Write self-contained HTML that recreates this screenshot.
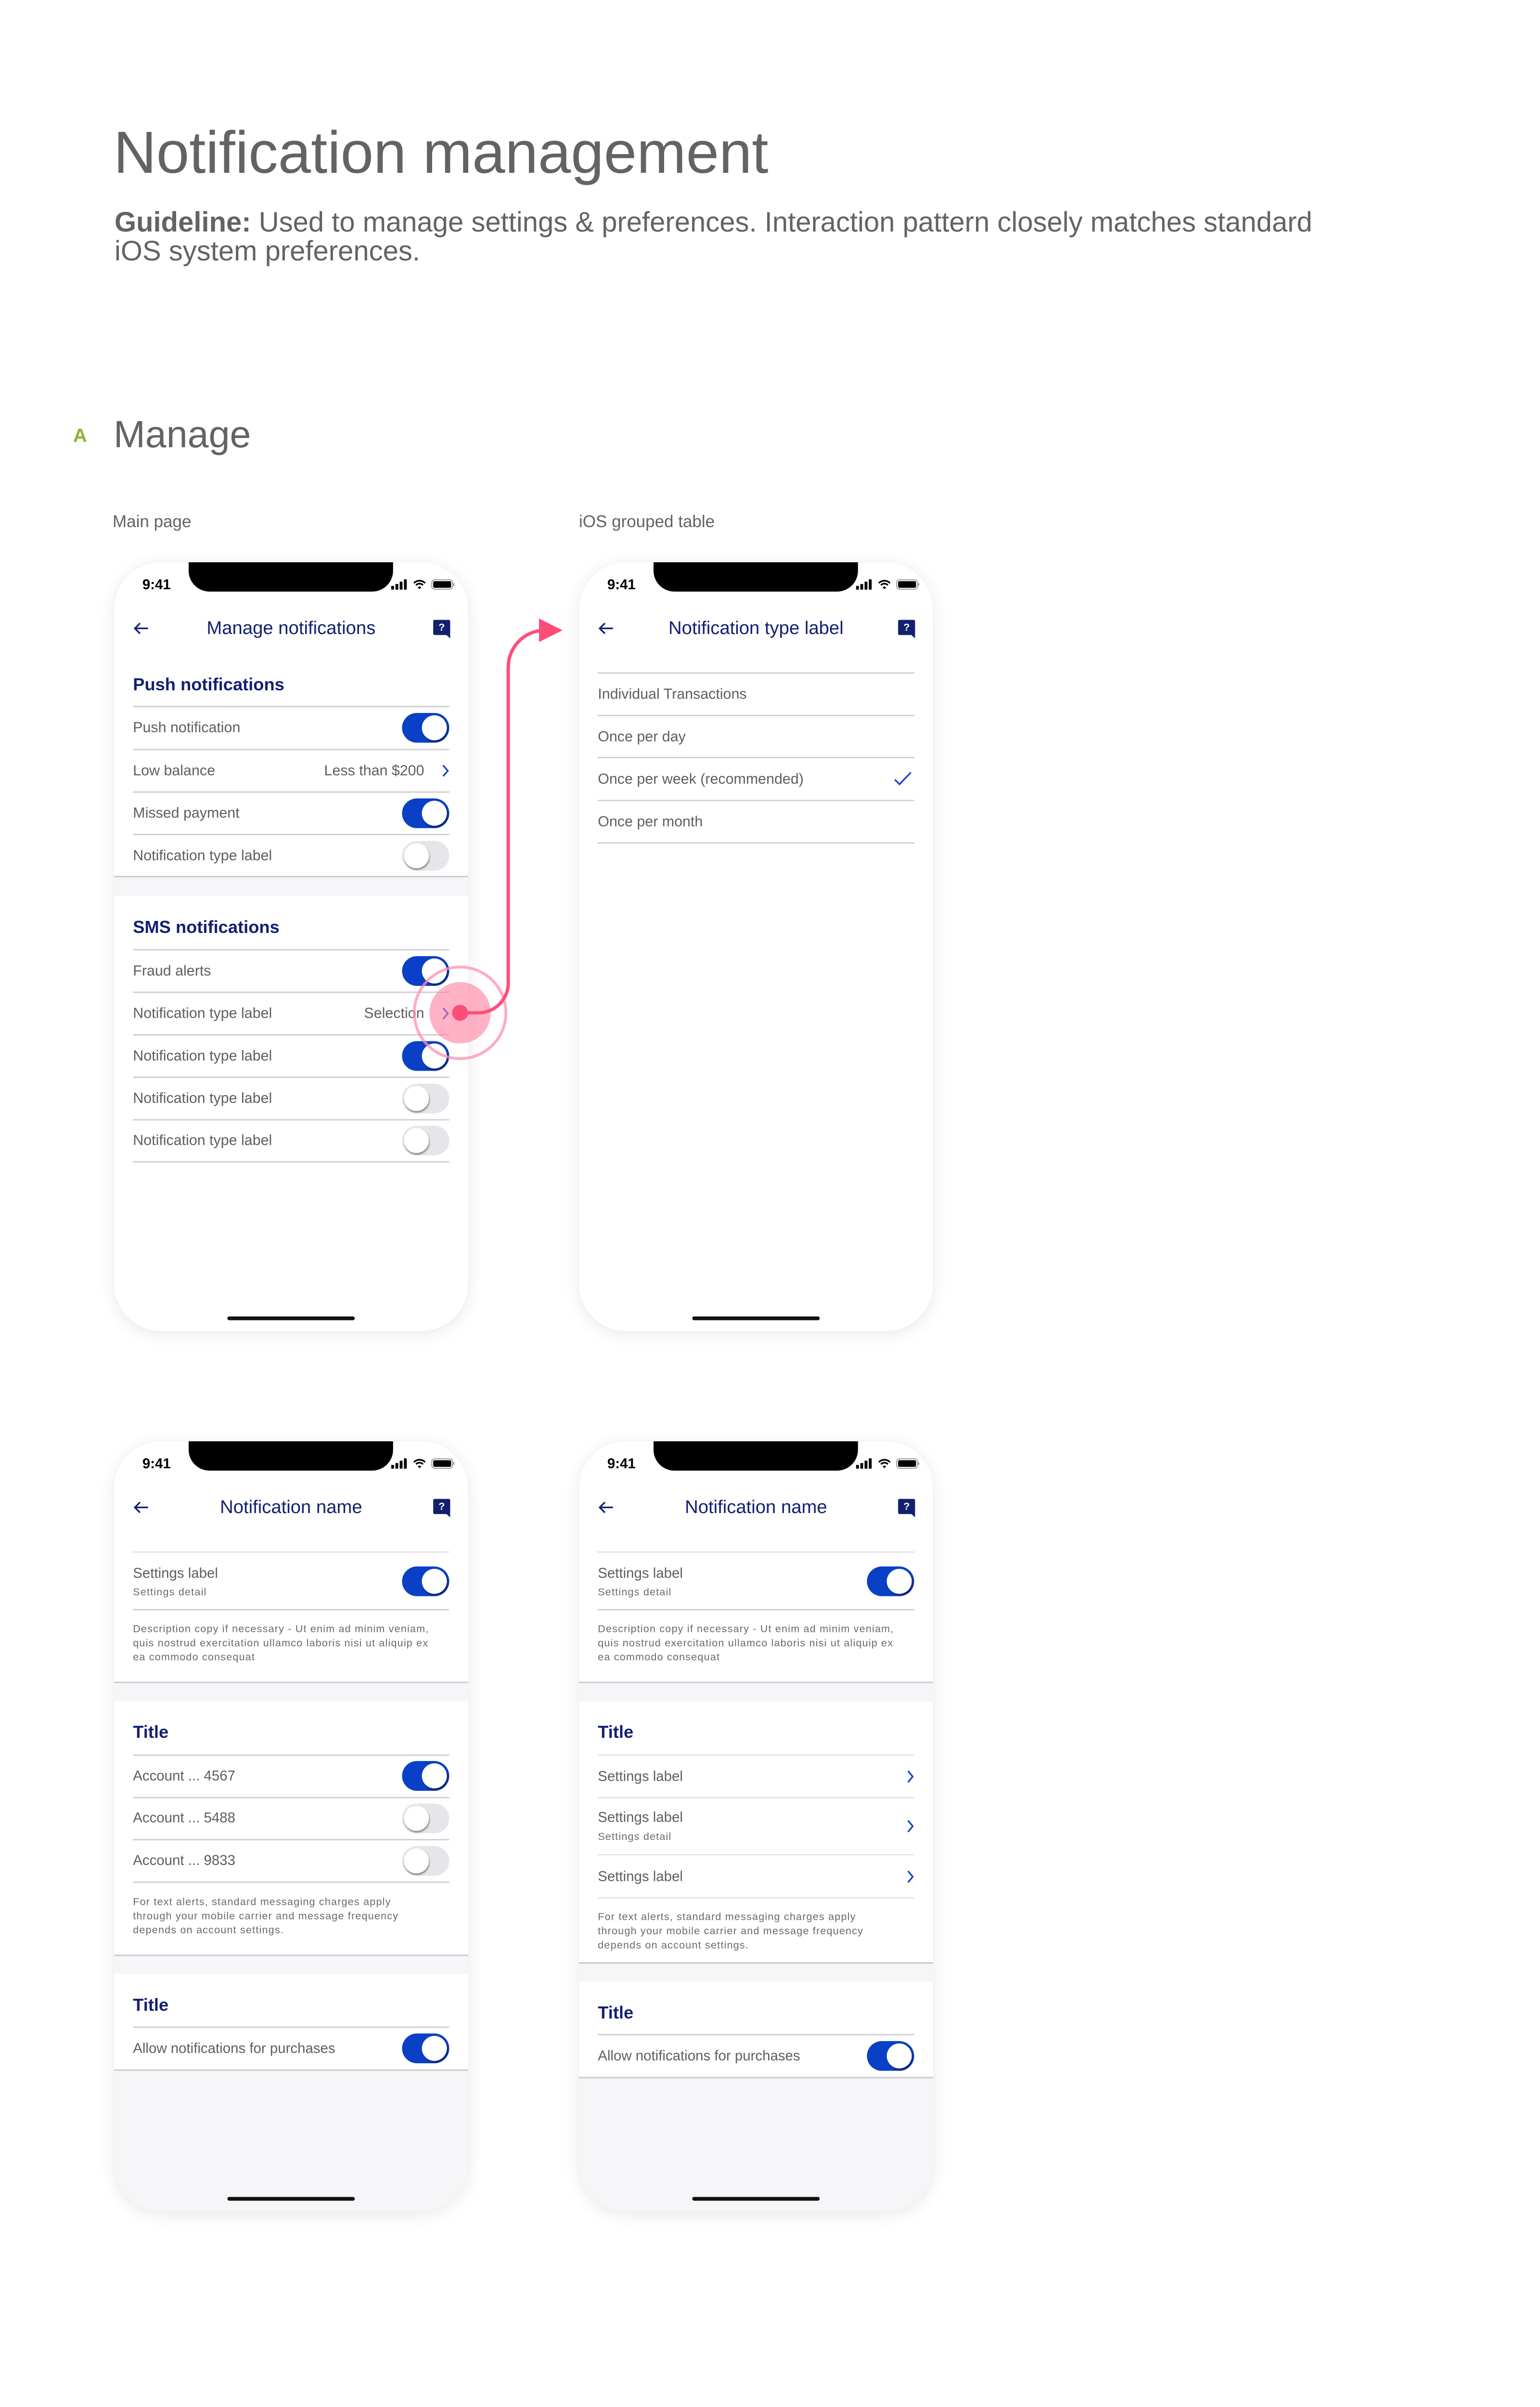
<!DOCTYPE html>
<html><head><meta charset="utf-8">
<style>
*{margin:0;padding:0;box-sizing:border-box}
html,body{width:3200px;height:5094px;background:#fff;overflow:hidden}
body{position:relative;font-family:"Liberation Sans",Arial,sans-serif;color:#636366}
.abs{position:absolute}
.ph{position:absolute;width:750px;height:1628px;border-radius:100px;background:#fff;overflow:hidden;box-shadow:0 6px 36px rgba(0,0,0,.09),0 0 6px rgba(0,0,0,.03);transform:scale(.981);transform-origin:0 0}
.ph>*{position:absolute}
.notch{left:158px;top:0;width:433px;height:62px;background:#000;border-radius:0 0 44px 44px}
.time{left:60px;top:48px;transform:translateY(-50%);font-size:30px;font-weight:bold;color:#000;line-height:34px}
.ttl{left:0;width:750px;text-align:center;top:140px;transform:translateY(-50%);font-size:39px;color:#13206f;line-height:46px}
.ln{left:40px;width:670px;height:3px;background:#cfcfd5}
.fl{left:0;width:750px;height:3px;background:#c9c9cf}
.gr{left:0;width:750px;background:#f6f6f8}
.c{transform:translateY(-50%);white-space:nowrap}
.lb{left:40px;font-size:31px;color:#5e5e63;line-height:38px}
.hd{left:40px;font-size:37px;font-weight:bold;color:#13206f;line-height:44px}
.rt{right:93px;font-size:31px;color:#5e5e63;line-height:38px;text-align:right}
.sm{left:40px;font-size:22px;color:#6a6a70;letter-spacing:1.2px;line-height:30px}
.tg{left:610px;width:100px;height:63px;border-radius:32px;background:#0a40c6}
.tg::after{content:"";position:absolute;top:5px;left:42px;width:53px;height:53px;border-radius:50%;background:#fff;box-shadow:2px 3px 3px rgba(0,0,30,.55)}
.tg.off{background:#e6e6ea}
.tg.off::after{left:4px;box-shadow:1px 3px 4px rgba(0,0,0,.45)}
.home{left:240px;width:270px;height:8px;border-radius:4px;background:#111}
.help{left:676px;top:122px;width:36px;height:32px;background:#13206f;border-radius:3px;color:#fff;font-weight:bold;font-size:22px;line-height:32px;text-align:center}
.help::after{content:"";position:absolute;right:0;bottom:-7px;border-left:9px solid transparent;border-top:8px solid #13206f}
</style></head><body>

<div class="abs" style="left:236px;top:256px;font-size:123px;line-height:123px;color:#636366;white-space:nowrap">Notification management</div>
<div class="abs" style="left:238px;top:432px;font-size:58px;line-height:60px;color:#636366;width:2900px;white-space:nowrap"><b>Guideline:</b> Used to manage settings &amp; preferences. Interaction pattern closely matches standard<br>iOS system preferences.</div>
<div class="abs" style="left:152px;top:885px;font-size:40px;line-height:40px;font-weight:bold;color:#8ab52a">A</div>
<div class="abs" style="left:236px;top:862px;font-size:79px;line-height:79px;color:#636366">Manage</div>
<div class="abs" style="left:234px;top:1066px;font-size:35px;line-height:36px;color:#636366">Main page</div>
<div class="abs" style="left:1203px;top:1066px;font-size:35px;line-height:36px;color:#636366">iOS grouped table</div>

<!-- PHONE 1 -->
<div class="ph" style="left:237px;top:1168px">
  <div class="notch"></div>
  <div class="time">9:41</div>
  <svg style="left:587px;top:34px" width="136" height="26" viewBox="0 0 136 26"><rect x="0" y="16" width="6" height="8" rx="1"/><rect x="9" y="12" width="6" height="12" rx="1"/><rect x="18" y="7" width="6" height="17" rx="1"/><rect x="27" y="2" width="6" height="22" rx="1"/><path d="M48 10 Q60 0 72 10" stroke="#000" stroke-width="3.5" fill="none"/><path d="M52.5 14.5 Q60 8 67.5 14.5" stroke="#000" stroke-width="3.5" fill="none"/><path d="M56 19 L60 23 L64 19 Q60 16 56 19Z"/><rect x="86" y="3" width="44" height="20" rx="6" fill="none" stroke="#999" stroke-width="2"/><rect x="89" y="6" width="38" height="14" rx="3"/><rect x="131.5" y="10" width="2.5" height="6" rx="1" fill="#999"/></svg>
  <svg style="left:40px;top:126px" width="34" height="28" viewBox="0 0 34 28"><path d="M32 14H4M15 3L4 14L15 25" stroke="#13206f" stroke-width="3.5" fill="none"/></svg>
  <div class="ttl">Manage notifications</div>
  <div class="help">?</div>

  <div class="hd c" style="top:259px">Push notifications</div>
  <div class="ln" style="top:304px"></div>
  <div class="lb c" style="top:350px">Push notification</div><div class="tg" style="top:319px"></div>
  <div class="ln" style="top:395px"></div>
  <div class="lb c" style="top:441px">Low balance</div><div class="rt c" style="top:441px">Less than $200</div>
  <svg style="left:694px;top:428px" width="16" height="27" viewBox="0 0 16 27"><path d="M3 2L13 13.5L3 25" stroke="#1c46c9" stroke-width="3.5" fill="none"/></svg>
  <div class="ln" style="top:485px"></div>
  <div class="lb c" style="top:531px">Missed payment</div><div class="tg" style="top:500px"></div>
  <div class="ln" style="top:575px"></div>
  <div class="lb c" style="top:621px">Notification type label</div><div class="tg off" style="top:590px"></div>
  <div class="gr" style="top:665px;height:42px"></div>
  <div class="fl" style="top:664px"></div>

  <div class="hd c" style="top:773px">SMS notifications</div>
  <div class="ln" style="top:819px"></div>
  <div class="lb c" style="top:865px">Fraud alerts</div><div class="tg" style="top:834px"></div>
  <div class="ln" style="top:909px"></div>
  <div class="lb c" style="top:955px">Notification type label</div><div class="rt c" style="top:955px">Selection</div>
  <svg style="left:694px;top:942px" width="16" height="27" viewBox="0 0 16 27"><path d="M3 2L13 13.5L3 25" stroke="#1c46c9" stroke-width="3.5" fill="none"/></svg>
  <div class="ln" style="top:999px"></div>
  <div class="lb c" style="top:1045px">Notification type label</div><div class="tg" style="top:1014px"></div>
  <div class="ln" style="top:1089px"></div>
  <div class="lb c" style="top:1135px">Notification type label</div><div class="tg off" style="top:1104px"></div>
  <div class="ln" style="top:1179px"></div>
  <div class="lb c" style="top:1224px">Notification type label</div><div class="tg off" style="top:1193px"></div>
  <div class="ln" style="top:1268px"></div>
  <div class="home" style="top:1597px"></div>
</div>

<!-- PHONE 2 -->
<div class="ph" style="left:1203px;top:1168px">
  <div class="notch"></div>
  <div class="time">9:41</div>
  <svg style="left:587px;top:34px" width="136" height="26" viewBox="0 0 136 26"><rect x="0" y="16" width="6" height="8" rx="1"/><rect x="9" y="12" width="6" height="12" rx="1"/><rect x="18" y="7" width="6" height="17" rx="1"/><rect x="27" y="2" width="6" height="22" rx="1"/><path d="M48 10 Q60 0 72 10" stroke="#000" stroke-width="3.5" fill="none"/><path d="M52.5 14.5 Q60 8 67.5 14.5" stroke="#000" stroke-width="3.5" fill="none"/><path d="M56 19 L60 23 L64 19 Q60 16 56 19Z"/><rect x="86" y="3" width="44" height="20" rx="6" fill="none" stroke="#999" stroke-width="2"/><rect x="89" y="6" width="38" height="14" rx="3"/><rect x="131.5" y="10" width="2.5" height="6" rx="1" fill="#999"/></svg>
  <svg style="left:40px;top:126px" width="34" height="28" viewBox="0 0 34 28"><path d="M32 14H4M15 3L4 14L15 25" stroke="#13206f" stroke-width="3.5" fill="none"/></svg>
  <div class="ttl">Notification type label</div>
  <div class="help">?</div>
  <div class="ln" style="top:233px"></div>
  <div class="lb c" style="top:279px">Individual Transactions</div>
  <div class="ln" style="top:323px"></div>
  <div class="lb c" style="top:369px">Once per day</div>
  <div class="ln" style="top:412px"></div>
  <div class="lb c" style="top:459px">Once per week (recommended)</div>
  <svg style="left:666px;top:442px" width="40" height="32" viewBox="0 0 40 32"><path d="M3 18L13 28L37 3" stroke="#1c46c9" stroke-width="3.5" fill="none"/></svg>
  <div class="ln" style="top:503px"></div>
  <div class="lb c" style="top:549px">Once per month</div>
  <div class="ln" style="top:593px"></div>
  <div class="home" style="top:1597px"></div>
</div>

<!-- PHONE 3 -->
<div class="ph" style="left:237px;top:2994px;height:1631px">
  <div class="notch"></div>
  <div class="time">9:41</div>
  <svg style="left:587px;top:34px" width="136" height="26" viewBox="0 0 136 26"><rect x="0" y="16" width="6" height="8" rx="1"/><rect x="9" y="12" width="6" height="12" rx="1"/><rect x="18" y="7" width="6" height="17" rx="1"/><rect x="27" y="2" width="6" height="22" rx="1"/><path d="M48 10 Q60 0 72 10" stroke="#000" stroke-width="3.5" fill="none"/><path d="M52.5 14.5 Q60 8 67.5 14.5" stroke="#000" stroke-width="3.5" fill="none"/><path d="M56 19 L60 23 L64 19 Q60 16 56 19Z"/><rect x="86" y="3" width="44" height="20" rx="6" fill="none" stroke="#999" stroke-width="2"/><rect x="89" y="6" width="38" height="14" rx="3"/><rect x="131.5" y="10" width="2.5" height="6" rx="1" fill="#999"/></svg>
  <svg style="left:40px;top:126px" width="34" height="28" viewBox="0 0 34 28"><path d="M32 14H4M15 3L4 14L15 25" stroke="#13206f" stroke-width="3.5" fill="none"/></svg>
  <div class="ttl">Notification name</div>
  <div class="help">?</div>
  <div class="ln" style="top:233px;background:#e3e3e7"></div>
  <div class="lb c" style="top:280px;font-size:30px">Settings label</div>
  <div class="sm c" style="top:319px">Settings detail</div>
  <div class="tg" style="top:265px"></div>
  <div class="ln" style="top:355px"></div>
  <div class="sm" style="top:382px;width:700px;white-space:normal">Description copy if necessary - Ut enim ad minim veniam,<br>quis nostrud exercitation ullamco laboris nisi ut aliquip ex<br>ea commodo consequat</div>
  <div class="gr" style="top:510px;height:40px"></div>
  <div class="fl" style="top:509px"></div>
  <div class="hd c" style="top:616px">Title</div>
  <div class="ln" style="top:663px"></div>
  <div class="lb c" style="top:709px;font-size:30px">Account ... 4567</div><div class="tg" style="top:677px"></div>
  <div class="ln" style="top:753px"></div>
  <div class="lb c" style="top:798px;font-size:30px">Account ... 5488</div><div class="tg off" style="top:767px"></div>
  <div class="ln" style="top:842px"></div>
  <div class="lb c" style="top:888px;font-size:30px">Account ... 9833</div><div class="tg off" style="top:857px"></div>
  <div class="ln" style="top:932px"></div>
  <div class="sm" style="top:960px;width:700px;white-space:normal">For text alerts, standard messaging charges apply<br>through your mobile carrier and message frequency<br>depends on account settings.</div>
  <div class="gr" style="top:1088px;height:40px"></div>
  <div class="fl" style="top:1087px"></div>
  <div class="hd c" style="top:1194px">Title</div>
  <div class="ln" style="top:1239px"></div>
  <div class="lb c" style="top:1286px;font-size:30px">Allow notifications for purchases</div><div class="tg" style="top:1254px"></div>
  <div class="gr" style="top:1331px;height:310px"></div>
  <div class="fl" style="top:1330px"></div>
  <div class="home" style="top:1600px"></div>
</div>

<!-- PHONE 4 -->
<div class="ph" style="left:1203px;top:2994px;height:1631px">
  <div class="notch"></div>
  <div class="time">9:41</div>
  <svg style="left:587px;top:34px" width="136" height="26" viewBox="0 0 136 26"><rect x="0" y="16" width="6" height="8" rx="1"/><rect x="9" y="12" width="6" height="12" rx="1"/><rect x="18" y="7" width="6" height="17" rx="1"/><rect x="27" y="2" width="6" height="22" rx="1"/><path d="M48 10 Q60 0 72 10" stroke="#000" stroke-width="3.5" fill="none"/><path d="M52.5 14.5 Q60 8 67.5 14.5" stroke="#000" stroke-width="3.5" fill="none"/><path d="M56 19 L60 23 L64 19 Q60 16 56 19Z"/><rect x="86" y="3" width="44" height="20" rx="6" fill="none" stroke="#999" stroke-width="2"/><rect x="89" y="6" width="38" height="14" rx="3"/><rect x="131.5" y="10" width="2.5" height="6" rx="1" fill="#999"/></svg>
  <svg style="left:40px;top:126px" width="34" height="28" viewBox="0 0 34 28"><path d="M32 14H4M15 3L4 14L15 25" stroke="#13206f" stroke-width="3.5" fill="none"/></svg>
  <div class="ttl">Notification name</div>
  <div class="help">?</div>
  <div class="ln" style="top:233px;background:#e3e3e7"></div>
  <div class="lb c" style="top:280px;font-size:30px">Settings label</div>
  <div class="sm c" style="top:319px">Settings detail</div>
  <div class="tg" style="top:265px"></div>
  <div class="ln" style="top:355px"></div>
  <div class="sm" style="top:382px;width:700px;white-space:normal">Description copy if necessary - Ut enim ad minim veniam,<br>quis nostrud exercitation ullamco laboris nisi ut aliquip ex<br>ea commodo consequat</div>
  <div class="gr" style="top:510px;height:41px"></div>
  <div class="fl" style="top:509px"></div>
  <div class="hd c" style="top:616px">Title</div>
  <div class="ln" style="top:663px;background:#e3e3e7"></div>
  <div class="lb c" style="top:710px;font-size:30px">Settings label</div>
  <svg style="left:694px;top:696px" width="16" height="28" viewBox="0 0 16 28"><path d="M3 2L13 14L3 26" stroke="#1c46c9" stroke-width="3.5" fill="none"/></svg>
  <div class="ln" style="top:753px;background:#e3e3e7"></div>
  <div class="lb c" style="top:797px;font-size:30px">Settings label</div>
  <div class="sm c" style="top:837px">Settings detail</div>
  <svg style="left:694px;top:801px" width="16" height="28" viewBox="0 0 16 28"><path d="M3 2L13 14L3 26" stroke="#1c46c9" stroke-width="3.5" fill="none"/></svg>
  <div class="ln" style="top:874px;background:#e3e3e7"></div>
  <div class="lb c" style="top:922px;font-size:30px">Settings label</div>
  <svg style="left:694px;top:908px" width="16" height="28" viewBox="0 0 16 28"><path d="M3 2L13 14L3 26" stroke="#1c46c9" stroke-width="3.5" fill="none"/></svg>
  <div class="ln" style="top:965px;background:#e3e3e7"></div>
  <div class="sm" style="top:992px;width:700px;white-space:normal">For text alerts, standard messaging charges apply<br>through your mobile carrier and message frequency<br>depends on account settings.</div>
  <div class="gr" style="top:1104px;height:40px"></div>
  <div class="fl" style="top:1103px"></div>
  <div class="hd c" style="top:1210px">Title</div>
  <div class="ln" style="top:1255px"></div>
  <div class="lb c" style="top:1302px;font-size:30px">Allow notifications for purchases</div><div class="tg" style="top:1270px"></div>
  <div class="gr" style="top:1347px;height:300px"></div>
  <div class="fl" style="top:1346px"></div>
  <div class="home" style="top:1600px"></div>
</div>

<!-- pink interaction overlay -->
<div class="abs" style="left:0;top:0;width:3200px;height:5094px;z-index:5;pointer-events:none;overflow:hidden">
<svg style="position:absolute;left:0;top:0;transform-origin:240px 1183px;transform:translate(-3px,-15px) scale(.981)" width="3200" height="3000" viewBox="0 0 3200 3000">
  <circle cx="973" cy="2137" r="65" fill="#ff7fa0" fill-opacity=".6"/>
  <circle cx="973" cy="2137" r="97" fill="none" stroke="#ff8fae" stroke-opacity=".75" stroke-width="6"/>
  <path d="M973 2137H1012A63 63 0 0 0 1075 2074V1405A78 78 0 0 1 1150 1327" fill="none" stroke="#ff4d79" stroke-width="7"/>
  <circle cx="973" cy="2137" r="17" fill="#ff4d79"/>
  <path d="M1140 1302L1190 1327L1140 1352Z" fill="#ff4d79"/>
</svg>
</div>
</body></html>
